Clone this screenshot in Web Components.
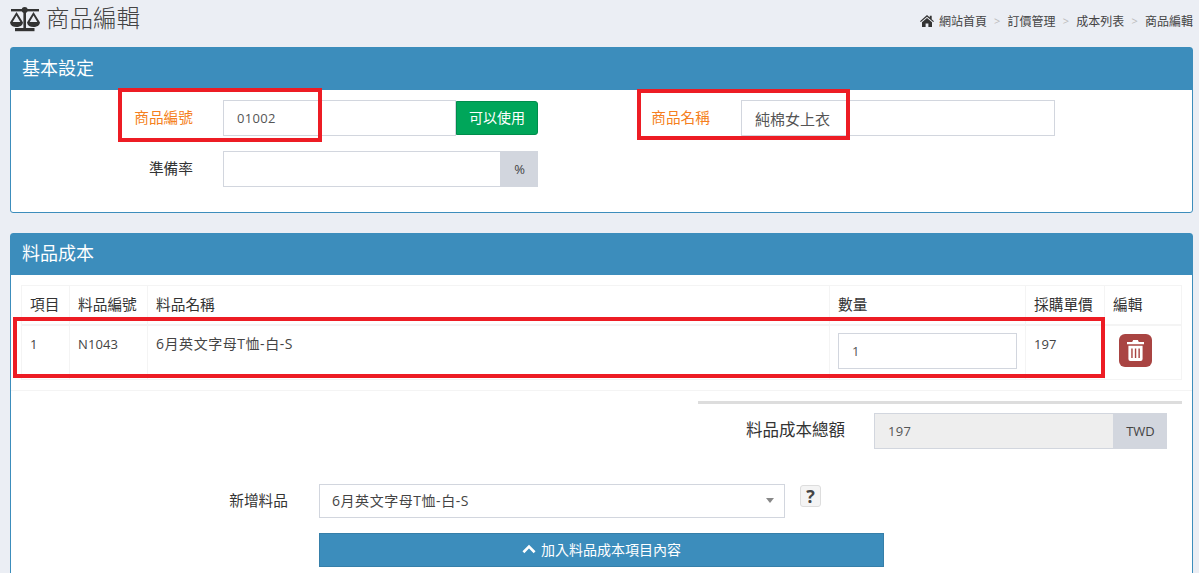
<!DOCTYPE html>
<html lang="zh-Hant">
<head>
<meta charset="utf-8">
<title>商品編輯</title>
<style>
  html, body { margin: 0; height: 573px; overflow: hidden; }
  body {
    position: relative;
    background: #ebeef4;
    color: #333;
    font-family: "Open Sans", "Noto Sans CJK TC", sans-serif;
    font-size: 14px;
  }
</style>
</head>
<body>
<page-header></page-header>
<ui-panel heading="基本設定" style="height:166px"><basic-form></basic-form></ui-panel>
<ui-panel heading="料品成本" style="margin-top:20px;height:400px;--head-h:41px">
  <cost-table></cost-table>
  <cost-footer></cost-footer>
</ui-panel>
<red-mark style="left:118px;top:88px;width:204px;height:54px"></red-mark>
<red-mark style="left:637px;top:89px;width:213px;height:51px"></red-mark>
<red-mark style="left:13px;top:317px;width:1092px;height:61px"></red-mark>

<script>
const fieldCss = `
  .input {
    box-sizing: border-box;
    display: flex;
    align-items: center;
    height: 36px;
    padding: 0 13px;
    background: #fff;
    border: 1px solid #d2d6de;
    color: #555;
    font-size: 13px;
    letter-spacing: .3px;
    white-space: nowrap;
  }
  .addon {
    box-sizing: border-box;
    display: flex;
    align-items: center;
    justify-content: center;
    height: 36px;
    background: #d2d6de;
    color: #444;
    font-size: 13px;
  }
  .label {
    font-size: 14.7px;
    color: #333;
    text-align: right;
    white-space: nowrap;
    padding-bottom: 3px;
  }
  .label.hot { color: #f57f20; }
`;

class PageHeader extends HTMLElement {
  constructor() {
    super();
    this.attachShadow({ mode: 'open' });
  }

  connectedCallback() {
    this.shadowRoot.innerHTML = `
      <style>
        :host {
          display: flex;
          justify-content: space-between;
          align-items: center;
          height: 47px;
          padding: 0 6px 9px 10px;
          box-sizing: border-box;
        }
        h1 {
          display: flex;
          align-items: center;
          gap: 6px;
          margin: 0;
          font-size: 23.5px;
          font-weight: 300;
          color: #444;
        }
        h1 span { margin-top: -5px; }
        nav {
          display: flex;
          align-items: center;
          margin-top: 3px;
          font-size: 12px;
          color: #444;
        }
        nav svg { margin-right: 5px; }
        i { width: 20.7px; text-align: center; font-style: normal; color: #bbb; font-size: 11px; }
      </style>
      <h1>
        <svg width="30" height="26" viewBox="0 0 30 26" fill="#333">
          <rect x="1" y="3" width="28" height="2.4"/>
          <circle cx="14.7" cy="4" r="3"/>
          <rect x="13.4" y="4" width="2.6" height="19"/>
          <rect x="5" y="22" width="19.5" height="3.2"/>
          <path d="M6.5 6 0 16.5c.4 3 3 4.5 6.5 4.5s6.100-1.500 6.500-4.500Zm0 3.600 3.800 6.400H2.700Z" fill-rule="evenodd"/>
          <path d="M23.500 6 17 16.500c.4 3 3 4.500 6.500 4.500s6.100-1.500 6.500-4.500Zm0 3.600 3.800 6.400h-7.600Z" fill-rule="evenodd"/>
        </svg>
        <span>商品編輯</span>
      </h1>
      <nav>
        <svg width="14" height="12" viewBox="0 0 14 12" fill="#333">
          <path d="M7 0 0 6.200l.8.900L7 1.800l6.200 5.300.8-.9-2.300-2V.8H9.800v1.700ZM2 7.300V12h3.600V8.500h2.800V12H12V7.300L7 3Z"/>
        </svg>
        <span>網站首頁</span><i>&gt;</i><span>訂價管理</span><i>&gt;</i><span>成本列表</span><i>&gt;</i><span>商品編輯</span>
      </nav>
    `;
  }
}

class UiPanel extends HTMLElement {
  constructor() {
    super();
    this.attachShadow({ mode: 'open' });
  }

  connectedCallback() {
    this.shadowRoot.innerHTML = `
      <style>
        :host {
          display: block;
          box-sizing: border-box;
          margin: 0 6px 0 10px;
          background: #fff;
          border: 1px solid #3c8dbc;
          border-radius: 3px;
        }
        header {
          box-sizing: border-box;
          display: flex;
          align-items: center;
          height: var(--head-h, 42px);
          padding: 0 11px 5px;
          background: #3c8dbc;
          color: #fff;
          font-size: 18px;
        }
      </style>
      <header>${this.getAttribute('heading')}</header>
      <slot></slot>
    `;
  }
}

class BasicForm extends HTMLElement {
  constructor() {
    super();
    this.attachShadow({ mode: 'open' });
  }

  connectedCallback() {
    this.shadowRoot.innerHTML = `
      <style>
        ${fieldCss}
        :host {
          display: grid;
          grid-template-columns: 182px 345px 172px 345px;
          grid-auto-rows: 36px;
          row-gap: 15px;
          padding-top: 10px;
          align-items: center;
        }
        .group { display: flex; margin-left: 30px; width: 315px; }
        .group .input { flex: 1; }
        .ok {
          box-sizing: border-box;
          width: 82px;
          height: 34px;
          margin-top: 1px;
          padding-bottom: 2px;
          display: flex;
          align-items: center;
          justify-content: center;
          background: #00a65a;
          border: 1px solid #008d4c;
          border-radius: 0 3px 3px 0;
          color: #fff;
          font-size: 14px;
        }
        .pct { width: 37px; }
        .name { margin-left: 31px; width: 314px; font-size: 15px; letter-spacing: 0; }
      </style>
      <div class="label hot">商品編號</div>
      <div class="group"><div class="input">01002</div><div class="ok">可以使用</div></div>
      <div class="label hot">商品名稱</div>
      <div class="input name">純棉女上衣</div>
      <div class="label">準備率</div>
      <div class="group"><div class="input"></div><div class="addon pct">%</div></div>
    `;
  }
}

class CostTable extends HTMLElement {
  constructor() {
    super();
    this.attachShadow({ mode: 'open' });
  }

  connectedCallback() {
    this.shadowRoot.innerHTML = `
      <style>
        ${fieldCss}
        :host { display: block; padding: 10px 10px 10px; border-bottom: 1px solid #f4f4f4; }
        table {
          width: 1160px;
          table-layout: fixed;
          border-collapse: collapse;
          border: 1px solid #f4f4f4;
          color: #444;
        }
        th, td { border: 1px solid #f4f4f4; text-align: left; vertical-align: top; line-height: 20px; }
        th { padding: 8px 8px 10px; font-weight: 400; font-size: 14.700px; color: #333; border-bottom-width: 2px; }
        td { padding: 7px 8px 10px; }
        td .input { width: 179px; color: #555; }
        .num { font-size: 13px; letter-spacing: .1px; padding-top: 8px; }
        .mixed { font-size: 14px; letter-spacing: .55px; padding-top: 8px; }
        .del {
          display: flex;
          align-items: center;
          justify-content: center;
          width: 33px;
          height: 33px;
          margin: 1px 0 0 6px;
          background: #a94442;
          border-radius: 6px;
        }
      </style>
      <table>
        <colgroup>
          <col style="width:48px"><col style="width:78px"><col style="width:682px">
          <col style="width:196px"><col style="width:79px"><col style="width:77px">
        </colgroup>
        <tr><th>項目</th><th>料品編號</th><th>料品名稱</th><th>數量</th><th>採購單價</th><th>編輯</th></tr>
        <tr>
          <td class="num">1</td>
          <td class="num">N1043</td>
          <td class="mixed">6月英文字母T恤-白-S</td>
          <td><div class="input">1</div></td>
          <td class="num">197</td>
          <td>
            <div class="del">
              <svg width="17" height="21" viewBox="0 0 18 22" fill="#fff">
                <path d="M6.500 0h5l1 2H18v2.500H0V2h5.500Z"/>
                <path fill-rule="evenodd" d="M1.500 6h15v14a2 2 0 0 1-2 2h-11a2 2 0 0 1-2-2ZM4.500 9v10h1.500V9Zm3.800 0v10h1.500V9Zm3.800 0v10h1.500V9Z"/>
              </svg>
            </div>
          </td>
        </tr>
      </table>
    `;
  }
}

class CostFooter extends HTMLElement {
  constructor() {
    super();
    this.attachShadow({ mode: 'open' });
  }

  connectedCallback() {
    this.shadowRoot.innerHTML = `
      <style>
        ${fieldCss}
        :host { display: block; padding: 10px 10px 0 0; }
        hr { margin: 0 0 9px 687px; border: 0; border-top: 3px solid #ddd; }
        .total { display: flex; align-items: center; justify-content: flex-end; padding-right: 15px; }
        .total b { font-weight: 400; font-size: 16.500px; color: #333; margin: 0 29px 4px 0; }
        .total .input { width: 240px; background: #eee; }
        .total .addon { width: 53px; }
        .add { display: flex; align-items: flex-start; margin-top: 35px; }
        .add .label { width: 277px; line-height: 32px; }
        .select {
          box-sizing: border-box;
          display: flex;
          align-items: center;
          justify-content: space-between;
          width: 466px;
          height: 34px;
          margin-left: 31px;
          padding: 0 12px 2px;
          border: 1px solid #d2d6de;
          color: #444;
          letter-spacing: .55px;
        }
        .select::after {
          content: "";
          border: 4px solid transparent;
          border-top: 5px solid #888;
          border-bottom: 0;
          margin-right: -2px;
        }
        .help {
          box-sizing: border-box;
          width: 21px;
          height: 22px;
          margin: 1px 0 0 15px;
          display: flex;
          align-items: center;
          justify-content: center;
          background: #f4f4f4;
          border: 1px solid #ddd;
          border-radius: 3px;
          font-size: 18px;
          font-weight: 700;
          color: #444;
        }
        .submit {
          box-sizing: border-box;
          display: flex;
          align-items: center;
          justify-content: center;
          gap: 5px;
          width: 565px;
          height: 34px;
          margin: 14px 0 0 308px;
          padding-bottom: 2px;
          background: #3c8dbc;
          border: 1px solid #367fa9;
          color: #fff;
        }
      </style>
      <hr>
      <div class="total">
        <b>料品成本總額</b>
        <div class="input">197</div>
        <div class="addon">TWD</div>
      </div>
      <div class="add">
        <div class="label">新增料品</div>
        <div class="select">6月英文字母T恤-白-S</div>
        <div class="help">?</div>
      </div>
      <div class="submit">
        <svg width="14" height="10" viewBox="0 0 15 10" fill="none" stroke="#fff" stroke-width="2.800">
          <path d="M1.500 8.500 7.500 2.500l6 6"/>
        </svg>
        加入料品成本項目內容
      </div>
    `;
  }
}

class RedMark extends HTMLElement {
  constructor() {
    super();
    this.attachShadow({ mode: 'open' });
  }

  connectedCallback() {
    this.shadowRoot.innerHTML = `
      <style>
        :host {
          position: absolute;
          box-sizing: border-box;
          border: 4.500px solid #ed1c24;
          pointer-events: none;
        }
      </style>
    `;
  }
}

customElements.define('page-header', PageHeader);
customElements.define('ui-panel', UiPanel);
customElements.define('basic-form', BasicForm);
customElements.define('cost-table', CostTable);
customElements.define('cost-footer', CostFooter);
customElements.define('red-mark', RedMark);
</script>
</body>
</html>
